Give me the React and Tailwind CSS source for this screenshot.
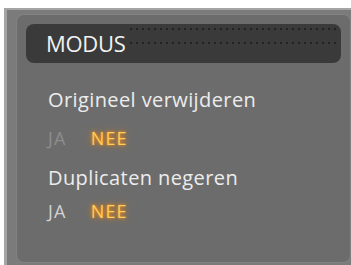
import React from 'react';

const glow = 'text-[#ffcb5c] [text-shadow:0_0_7px_#ff8200,0_0_3px_#ff9a10]';
const dots = 'absolute left-[104px] right-[5px] h-[2px] bg-[repeating-linear-gradient(90deg,#222_0_2px,transparent_2px_6px)]';

export default function App() {
  return (
    <div className="w-[351px] h-[265px] bg-white pt-[8px] overflow-hidden" style={{ fontFamily: '"Open Sans", "Noto Sans", sans-serif' }}>
      <div className="h-full ml-[4px] bg-[#7b7b7b] border-l-[3px] border-t-[2px] border-[#a4a4a4] pl-[9px] pt-[4px]">
        <div className="h-[249px] bg-[#6c6c6c] rounded-[8px] border border-[#828282] pt-[9px] px-[9px]">
          <div className="relative h-[39px] bg-[#3a3a3a] rounded-[8px] flex items-center pl-[20px]">
            <span className="text-[22px] font-medium text-[#f2f2f2] tracking-[-0.3px]">MODUS</span>
            <div className={`${dots} top-[4px]`}></div>
            <div className={`${dots} top-[18px]`}></div>
          </div>
          <div className="pl-[22px] pt-[27px]">
            <div className="text-[20px] font-medium leading-none text-[#ececec] tracking-[0.4px]">Origineel verwijderen</div>
            <div className="flex items-center gap-[24px] mt-[19px] text-[18px] font-medium leading-none tracking-[1.2px]">
              <span className="text-[#8d8d8d]">JA</span>
              <span className={glow}>NEE</span>
            </div>
            <div className="text-[20px] font-medium leading-none text-[#ececec] mt-[21px] tracking-[0.4px]">Duplicaten negeren</div>
            <div className="flex items-center gap-[24px] mt-[14px] text-[18px] font-medium leading-none tracking-[1.2px]">
              <span className="text-[#d2d2d2]">JA</span>
              <span className={glow}>NEE</span>
            </div>
          </div>
        </div>
      </div>
    </div>
  );
}
